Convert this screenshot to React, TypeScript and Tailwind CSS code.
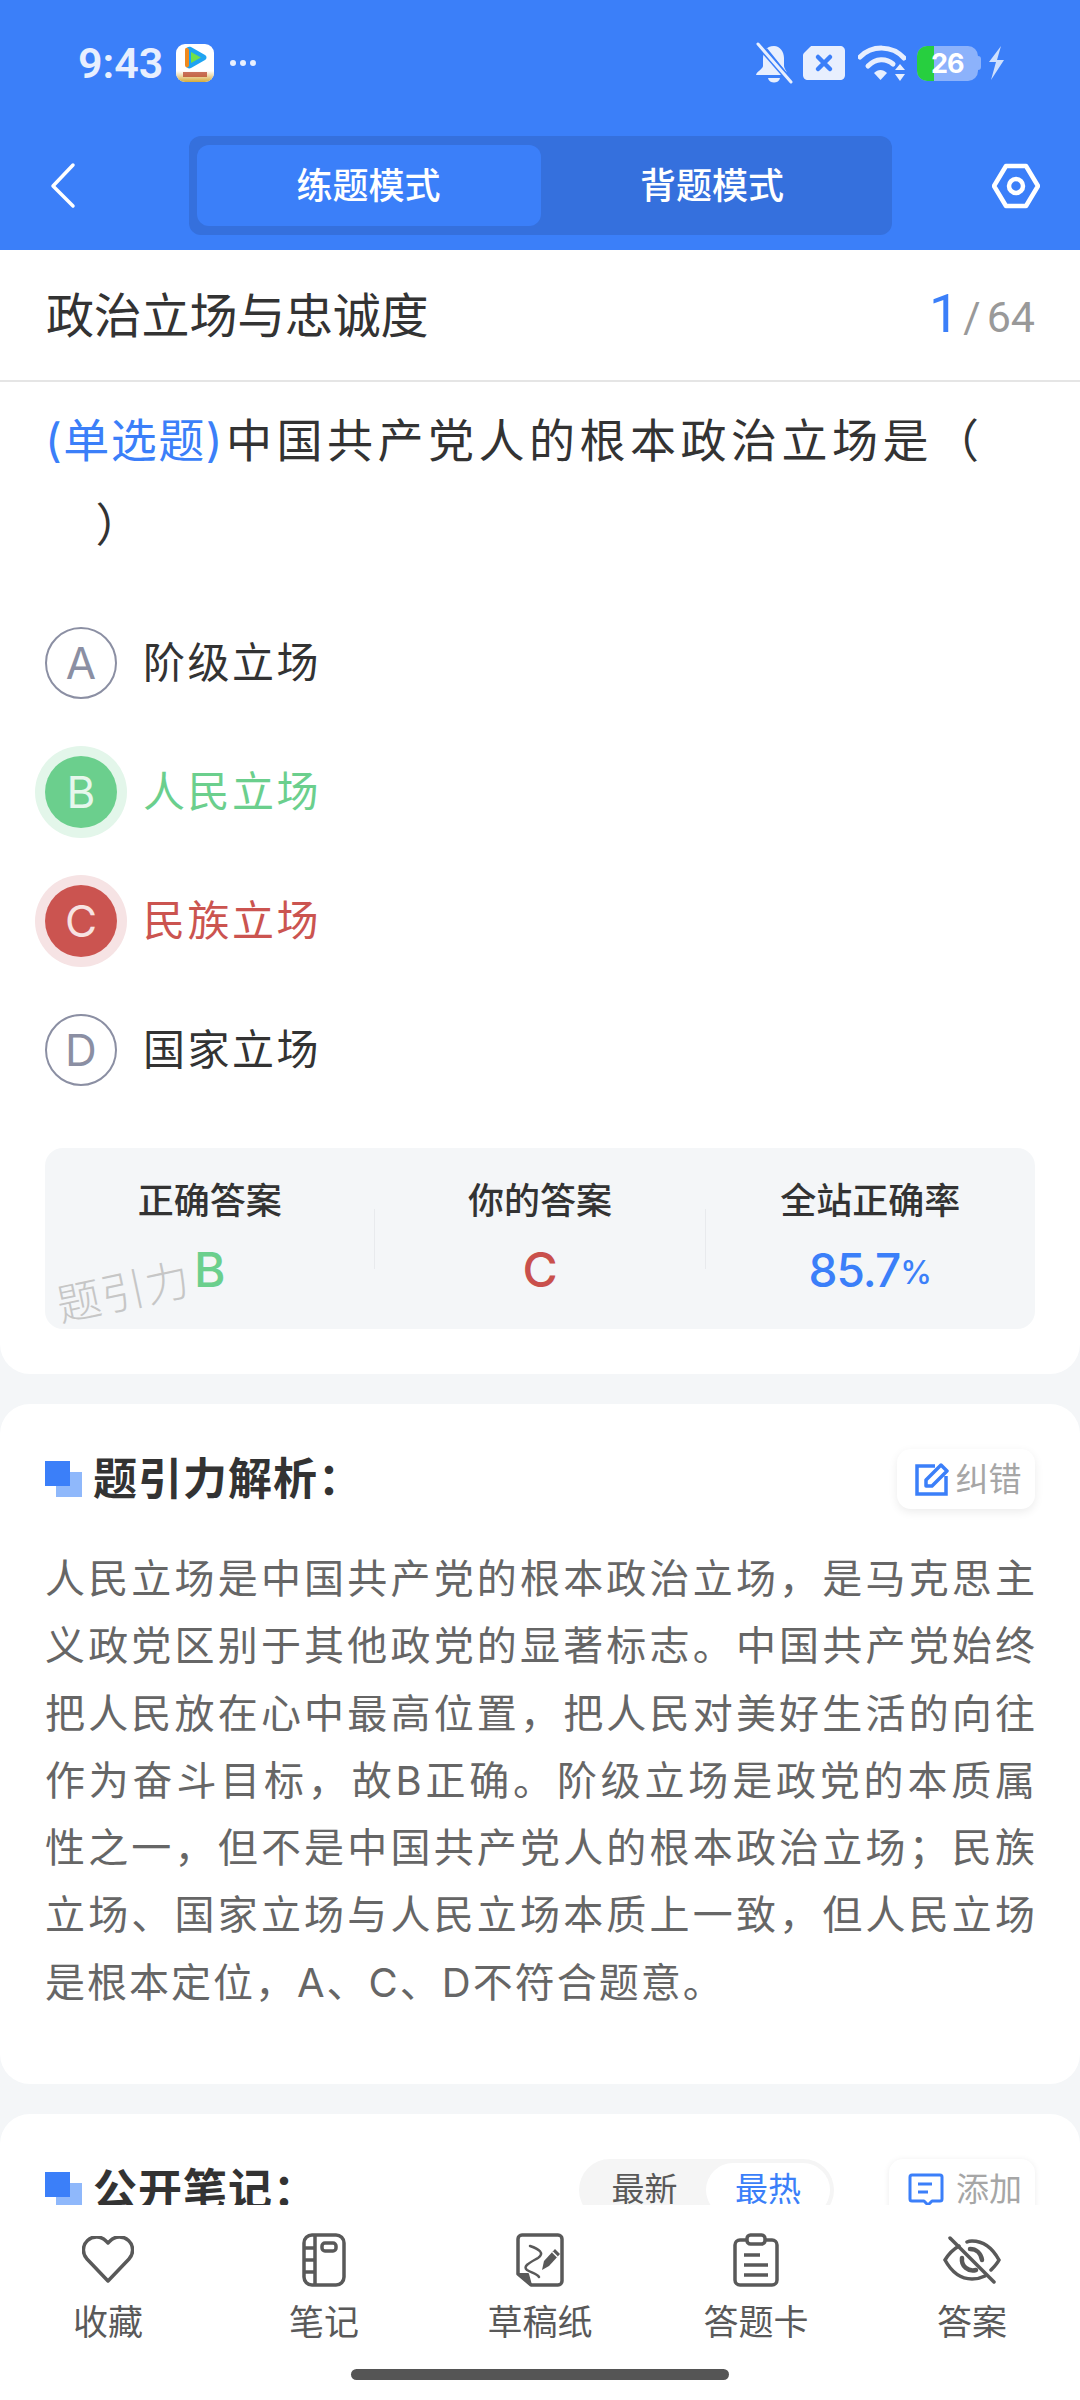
import React from "react";

const FONT = "font-['Inter','Noto_Sans_CJK_SC',sans-serif]";

function StatusBar() {
  return (
    <div className="flex h-[136px] items-start justify-between pl-[78px] pr-[75px] pt-[42px] text-[#e8effe]">
      <div className="flex h-[42px] items-center">
        <span className="w-[98px] font-['Roboto',sans-serif] text-[43px] font-semibold leading-[42px]">9:43</span>
        <svg width="38" height="38" viewBox="0 0 38 38">
          <defs>
            <linearGradient id="appgold" x1="0" y1="0" x2="0" y2="1">
              <stop offset="0" stopColor="#ffffff" />
              <stop offset="1" stopColor="#d6ab3a" />
            </linearGradient>
          </defs>
          <rect width="38" height="38" rx="9" fill="#ffffff" />
          <path d="M0 27H38V29A9 9 0 0 1 29 38H9A9 9 0 0 1 0 29Z" fill="url(#appgold)" />
          <path d="M10 6C10 3 13 2 15 3L29 11C31 12 31 15 29 16L15 24C13 25 10 24 10 21Z" fill="#1fa4f2" />
          <path d="M9 6V21C9 24 12 24 13 22V6C12 3 9 3 9 6Z" fill="#f08a1d" />
          <path d="M15 8L25 13.500L15 19Z" fill="#6fe04a" />
          <rect x="7" y="28" width="24" height="5" fill="#b5391f" opacity="0.7" />
        </svg>
        <span className="ml-[16px] flex gap-[4px]">
          <i className="h-[6px] w-[6px] rounded-full bg-[#e8effe]" />
          <i className="h-[6px] w-[6px] rounded-full bg-[#e8effe]" />
          <i className="h-[6px] w-[6px] rounded-full bg-[#e8effe]" />
        </span>
      </div>
      <div className="flex h-[42px] items-center">
        <svg width="38" height="42" viewBox="0 0 38 42" className="mr-[9px]">
          <path d="M19 4C11 4 8 10 8 17V24C8 27 2 29 1 33H29L8 8ZM12 6L32 31C31 28 29 26 29 24V16C29 10 25 4 19 4Z" fill="#e8effe" />
          <path d="M13 36H25C24 42 14 42 13 36Z" fill="#e8effe" />
          <path d="M3 2L36 40" stroke="#3b7ff9" strokeWidth="6" />
          <path d="M3 2L36 40" stroke="#e8effe" strokeWidth="3" strokeLinecap="round" />
        </svg>
        <svg width="44" height="36" viewBox="0 0 44 36" className="mr-[12px]">
          <path d="M10 1H38C41 1 43 3 43 6V30C43 33 41 35 38 35H6C3 35 1 33 1 30V11C1 10 1 9 2 8L8 2C8.500 1.500 9 1 10 1Z" fill="#e8effe" />
          <path d="M16 12L28 24M28 12L16 24" stroke="#3b7ff9" strokeWidth="4.500" strokeLinecap="round" />
        </svg>
        <svg width="48" height="36" viewBox="0 0 48 36" className="mr-[11px]">
          <path d="M2 12C14 0 34 0 46 13" stroke="#e8effe" strokeWidth="5" fill="none" strokeLinecap="round" />
          <path d="M10 21C18 13 28 13 35 19" stroke="#e8effe" strokeWidth="5" fill="none" strokeLinecap="round" />
          <path d="M16 28C20 24 25 24 29 28L22.500 35Z" fill="#e8effe" />
          <path d="M42 19L47 25H37ZM42 36L37 29H47Z" fill="#e8effe" />
        </svg>
        <div className="relative flex h-[35px] w-[61px] overflow-hidden rounded-[10px] bg-[#8cb2fb]">
          <div className="h-full w-[17px] bg-[#27cf3f]" />
          <span className="absolute left-[14px] top-0 font-['Inter',sans-serif] text-[27px] font-bold leading-[35px] tracking-[-1px] text-white">26</span>
        </div>
        <div className="mr-[7px] h-[14px] w-[3px] rounded-r-[3px] bg-[#8cb2fb]" />
        <svg width="17" height="34" viewBox="0 0 17 34">
          <path d="M13 0L1 16H8L3 34L16 14H9Z" fill="#cfe0fd" />
        </svg>
      </div>
    </div>
  );
}

function NavBar() {
  return (
    <div className="flex h-[99px] items-center justify-between px-[40px]">
      <svg width="48" height="48" viewBox="0 0 48 48" fill="none">
        <path d="M33 3L13 24L33 44" stroke="#ffffff" strokeWidth="3.500" strokeLinecap="round" strokeLinejoin="round" />
      </svg>
      <div className="flex h-[99px] w-[703px] items-center rounded-[12px] bg-[#3570dd] px-[8px]">
        <div className="flex h-[81px] w-[344px] items-center justify-center rounded-[12px] bg-[#3b7ff9] text-[36px] font-medium text-white">练题模式</div>
        <div className="flex h-[81px] flex-1 items-center justify-center text-[36px] font-medium text-white">背题模式</div>
      </div>
      <svg width="48" height="46" viewBox="0 0 48 46" fill="none">
        <path d="M14 3H34L46 23L34 43H14L2 23Z" stroke="#ffffff" strokeWidth="4.500" strokeLinejoin="round" />
        <circle cx="24" cy="23" r="7" stroke="#ffffff" strokeWidth="4.500" />
      </svg>
    </div>
  );
}

function Option({ letter, text, state }: { letter: string; text: string; state?: "ok" | "bad" }) {
  const circle =
    state === "ok"
      ? "bg-[#6bcf8d] text-[#e6f7ec] shadow-[0_0_0_10px_#e3f6ea]"
      : state === "bad"
        ? "bg-[#cb5450] text-[#f7e3e2] shadow-[0_0_0_10px_#f6e3e4]"
        : "border-2 border-[#8b8fa3] text-[#8b8fa3]";
  const color = state === "ok" ? "text-[#6bcf8d]" : state === "bad" ? "text-[#cb5450]" : "text-[#333333]";
  return (
    <div className="flex h-[129px] items-center pl-[45px]">
      <div className={`flex h-[72px] w-[72px] items-center justify-center rounded-full text-[44px] ${circle}`}>{letter}</div>
      <div className={`ml-[26px] text-[42px] leading-[60px] tracking-[2.500px] ${color}`}>{text}</div>
    </div>
  );
}

function Stat({ label, children }: { label: string; children: React.ReactNode }) {
  return (
    <div className="flex flex-1 flex-col items-center pt-[28px]">
      <div className="text-[36px] font-medium leading-[50px] text-[#333333]">{label}</div>
      <div className="mt-[14px] flex h-[60px] items-center font-medium">{children}</div>
    </div>
  );
}

function SectionMark() {
  return (
    <div className="relative h-[36px] w-[37px] shrink-0">
      <div className="absolute bottom-0 right-0 h-[25px] w-[26px] bg-[#8fb8fb]" />
      <div className="absolute left-0 top-0 h-[25px] w-[25px] bg-[#3b7ff9]" />
    </div>
  );
}

const LINES = [
  "人民立场是中国共产党的根本政治立场，是马克思主",
  "义政党区别于其他政党的显著标志。中国共产党始终",
  "把人民放在心中最高位置，把人民对美好生活的向往",
  "作为奋斗目标，故B正确。阶级立场是政党的本质属",
  "性之一，但不是中国共产党人的根本政治立场；民族",
  "立场、国家立场与人民立场本质上一致，但人民立场",
];

function BottomItem({ label, icon }: { label: string; icon: React.ReactNode }) {
  return (
    <div className="flex w-[216px] flex-col items-center">
      <div className="flex h-[56px] items-center justify-center">{icon}</div>
      <div className="mt-[11px] text-[35px] leading-[46px] text-[#595959]">{label}</div>
    </div>
  );
}

export default function App() {
  return (
    <div className={`flex h-[2400px] w-[1080px] flex-col overflow-hidden bg-white ${FONT}`}>
      <header className="h-[250px] shrink-0 bg-[#3b7ff9]">
        <StatusBar />
        <NavBar />
      </header>

      <main className="min-h-0 flex-1 overflow-hidden bg-[#f4f6f8]">
        <section className="rounded-b-[30px] bg-white pb-[45px]">
          <div className="flex h-[132px] items-center justify-between border-b-2 border-[#e5e5e5] pl-[46px] pr-[45px] pt-[2px]">
            <div className="text-[48px] leading-[60px] tracking-[-0.200px] text-[#333333]">政治立场与忠诚度</div>
            <div className="flex items-baseline pb-[5px] font-['Roboto',sans-serif] text-[#999999]">
              <span className="text-[54px] text-[#3b7ff9]">1</span>
              <span className="ml-[4px] text-[42px]">/</span>
              <span className="ml-[6px] text-[43px]">64</span>
            </div>
          </div>
          <div className="pl-[45px] pr-[30px] pt-[17px] text-[46px] leading-[83.500px] tracking-[4.500px] text-[#333333]">
            <span className="mr-[2px] tracking-[1.500px] text-[#3b7ff9]">(单选题)</span>中国共产党人的根本政治立场是（
            <br />
            {"\u3000"}）
          </div>
          <div className="mt-[32px]">
            <Option letter="A" text="阶级立场" />
            <Option letter="B" text="人民立场" state="ok" />
            <Option letter="C" text="民族立场" state="bad" />
            <Option letter="D" text="国家立场" />
          </div>
          <div className="relative mx-[45px] mt-[34px] flex h-[181px] overflow-hidden rounded-[18px] bg-[#f4f6f8]">
            <Stat label="正确答案">
              <span className="text-[48px] text-[#6bcf8d]">B</span>
            </Stat>
            <div className="h-[60px] w-px self-center bg-[#e8eaed]" />
            <Stat label="你的答案">
              <span className="text-[48px] text-[#c9504c]">C</span>
            </Stat>
            <div className="h-[60px] w-px self-center bg-[#e8eaed]" />
            <Stat label="全站正确率">
              <span className="text-[46px] tracking-[-1px] text-[#3b7ff9]">85.7</span>
              <span className="mt-[6px] text-[32px] text-[#3b7ff9]">%</span>
            </Stat>
            <div className="absolute left-[11px] top-[119px] -rotate-[12deg] text-[44px] font-light leading-[50px] tracking-[1px] text-[#c6c6c6]">题引力</div>
          </div>
        </section>

        <section className="mt-[30px] rounded-[30px] bg-white px-[45px] pb-[68px] pt-[45px]">
          <div className="flex h-[59px] items-center">
            <SectionMark />
            <div className="ml-[11px] pt-[2px] text-[44px] font-semibold leading-[59px] tracking-[1px] text-[#333333]">题引力解析：</div>
            <div className="ml-auto flex h-[60px] w-[138px] items-center justify-center rounded-[14px] bg-white pl-[4px] shadow-[0_3px_10px_rgba(0,0,0,0.08)]">
              <svg width="34" height="34" viewBox="0 0 34 34" fill="none">
                <path d="M20 4H2V32H31V14" stroke="#3b7ff9" strokeWidth="3.500" />
                <path d="M11 18L26 3L32 9L17 24L11 24Z" stroke="#3b7ff9" strokeWidth="3.500" strokeLinejoin="round" />
              </svg>
              <span className="ml-[7px] text-[33px] leading-[40px] text-[#a6a6a6]">纠错</span>
            </div>
          </div>
          <div className="mt-[37px] text-[40px] leading-[67.300px] text-[#666666]">
            {LINES.map((l) => (
              <div key={l} className="[text-align-last:justify] whitespace-nowrap">
                {l}
              </div>
            ))}
            <div className="tracking-[2px]">是根本定位，A、C、D不符合题意。</div>
          </div>
        </section>

        <section className="mt-[30px] rounded-t-[30px] bg-white px-[45px] pt-[45px]">
          <div className="flex h-[62px] items-center">
            <SectionMark />
            <div className="ml-[11px] text-[44px] font-semibold leading-[59px] tracking-[1px] text-[#333333]">公开笔记：</div>
            <div className="ml-auto flex h-[62px] w-[255px] items-center rounded-full bg-[#f5f5f5] p-[4px] text-[33px]">
              <div className="flex w-[123px] justify-center text-[#595959]">最新</div>
              <div className="flex h-full flex-1 items-center justify-center rounded-full bg-white text-[#3b7ff9]">最热</div>
            </div>
            <div className="ml-[55px] flex h-[62px] w-[146px] items-center justify-center rounded-[14px] bg-white pl-[6px] shadow-[0_1px_6px_rgba(0,0,0,0.08)]">
              <svg width="36" height="34" viewBox="0 0 36 34" fill="none">
                <path d="M4 2H32A2 2 0 0 1 34 4V26A2 2 0 0 1 32 28H24L20 32L16 28H4A2 2 0 0 1 2 26V4A2 2 0 0 1 4 2Z" stroke="#3b7ff9" strokeWidth="3" strokeLinejoin="round" />
                <path d="M10 11H24M10 19H20" stroke="#3b7ff9" strokeWidth="3" />
              </svg>
              <span className="ml-[12px] text-[33px] text-[#a6a6a6]">添加</span>
            </div>
          </div>
        </section>
      </main>

      <footer className="h-[195px] shrink-0 bg-white">
        <div className="flex pt-[27px]">
          <BottomItem
            label="收藏"
            icon={
              <svg width="52" height="48" viewBox="0 0 52 48" fill="none">
                <path d="M26 45L5 23A13 13 0 0 1 24 5L26 7L28 5A13 13 0 0 1 47 23Z" stroke="#595959" strokeWidth="3.500" strokeLinejoin="round" />
              </svg>
            }
          />
          <BottomItem
            label="笔记"
            icon={
              <svg width="44" height="54" viewBox="0 0 44 54" fill="none" stroke="#595959" strokeWidth="3.500">
                <rect x="2" y="2" width="40" height="50" rx="8" />
                <path d="M13 2V52M2 15H13M2 27H13M2 39H13" />
                <rect x="20" y="10" width="14" height="8" rx="3" />
              </svg>
            }
          />
          <BottomItem
            label="草稿纸"
            icon={
              <svg width="50" height="54" viewBox="0 0 50 54" fill="none">
                <path d="M7 2H43A4 4 0 0 1 47 6V48A4 4 0 0 1 43 52H16L3 41V6A4 4 0 0 1 7 2Z" stroke="#595959" strokeWidth="3.500" strokeLinejoin="round" />
                <path d="M3 41H13L16 52Z" fill="#595959" stroke="#595959" strokeWidth="2" strokeLinejoin="round" />
                <path d="M15 13C24 16 30 20 23 25C16 29 7 33 12 37C17 40 22 41 24 44" stroke="#595959" strokeWidth="2.500" strokeLinecap="round" />
                <path d="M27 37L29 28L40 16L45 21L34 33Z" fill="#595959" />
                <path d="M37.500 19L42.500 24" stroke="#ffffff" strokeWidth="1.500" />
              </svg>
            }
          />
          <BottomItem
            label="答题卡"
            icon={
              <svg width="46" height="54" viewBox="0 0 46 54" fill="none" stroke="#595959" strokeWidth="3.500">
                <path d="M13 7H7A5 5 0 0 0 2 12V47A5 5 0 0 0 7 52H39A5 5 0 0 0 44 47V12A5 5 0 0 0 39 7H33" strokeLinecap="round" />
                <rect x="14" y="2" width="18" height="9" rx="3.500" />
                <path d="M11 22H27M11 32H35M11 42H35" />
              </svg>
            }
          />
          <BottomItem
            label="答案"
            icon={
              <svg width="58" height="48" viewBox="0 0 58 48" fill="none" stroke="#595959" strokeWidth="3.500">
                <path d="M16 10C9 14 5 19 2 24C8 35 17 43 29 43C34 43 38 42 42 40M24 6C26 5 27 5 29 5C41 5 50 13 56 24C54 28 51 31 48 34" strokeLinecap="round" />
                <path d="M19 22C18 30 25 36 33 34" strokeWidth="4.500" strokeLinecap="round" />
                <path d="M27 13C33 13 38 17 39 24" strokeWidth="4.500" strokeLinecap="round" />
                <path d="M7 2L51 46" strokeWidth="3.500" strokeLinecap="round" />
              </svg>
            }
          />
        </div>
        <div className="mx-auto mt-[24px] h-[11px] w-[378px] rounded-full bg-[#555555]" />
      </footer>
    </div>
  );
}
